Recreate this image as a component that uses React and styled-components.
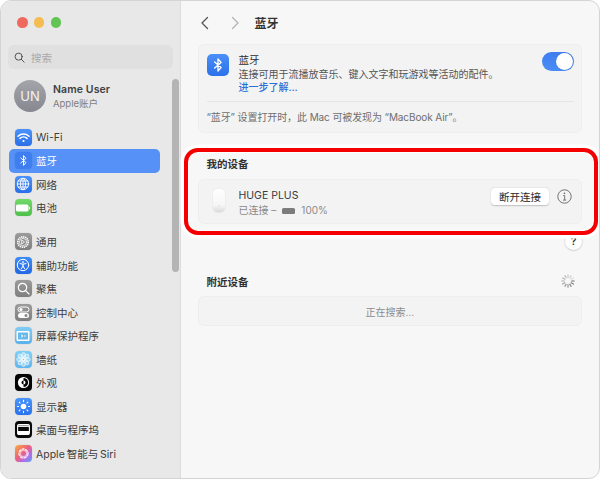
import React from "react";
import styled, { createGlobalStyle } from "styled-components";

const Global = createGlobalStyle`
  html, body { margin: 0; padding: 0; background: #fff; }
  * { box-sizing: border-box; }
  body { font-family: "Inter", "Noto Sans CJK SC", sans-serif; -webkit-font-smoothing: antialiased; }
`;

const Frame = styled.div`
  position: relative;
  width: 600px;
  height: 479px;
  display: flex;
  overflow: hidden;
  border-radius: 11px;
  border: 1px solid #d4d4d4;
  background: #f7f7f7;
`;

const Sidebar = styled.aside`
  position: relative;
  width: 180px;
  flex: none;
  display: flex;
  flex-direction: column;
  background: #e8e8e8;
  border-right: 1px solid #dcdcdc;
`;

const TrafficBar = styled.div`
  height: 43px;
  flex: none;
  display: flex;
  align-items: center;
  gap: 6.3px;
  padding: 0 0 0 16px;
`;

const Light = styled.span`
  width: 10.5px;
  height: 10.5px;
  border-radius: 50%;
  background: ${(p) => p.$c};
`;

const Search = styled.div`
  height: 24px;
  margin: 1px 7px 0 7px;
  border-radius: 6px;
  background: #e0e0e0;
  display: flex;
  align-items: center;
  gap: 6px;
  padding-left: 6px;
  font-size: 10.5px;
  color: #a9a9a9;
`;

const Account = styled.div`
  height: 32px;
  margin: 11px 0 0 13px;
  display: flex;
  align-items: center;
  gap: 7px;
`;

const Avatar = styled.div`
  width: 32px;
  height: 32px;
  border-radius: 50%;
  background: linear-gradient(#a4a5ab, #87888f);
  color: #f3f3f3;
  font-size: 13px;
  display: flex;
  align-items: center;
  justify-content: center;
`;

const AccountText = styled.div`
  display: flex;
  flex-direction: column;
  gap: 2px;
`;

const AccountName = styled.div`
  font-size: 10.5px;
  line-height: 13px;
  font-weight: 600;
  letter-spacing: 0.1px;
  color: #404040;
`;

const AccountSub = styled.div`
  font-size: 9.5px;
  line-height: 11px;
  color: #7d7d7d;
`;

const NavGroup = styled.nav`
  display: flex;
  flex-direction: column;
  margin-top: ${(p) => p.$top}px;
`;

const NavRow = styled.div`
  height: 23.5px;
  width: 151px;
  margin-left: 8px;
  padding-left: 5.5px;
  display: flex;
  align-items: center;
  gap: 4.5px;
  border-radius: 5px;
  font-size: 10.5px;
  color: ${(p) => (p.$active ? "#fff" : "#3d3d3d")};
  background: ${(p) => (p.$active ? "#5591f6" : "transparent")};
`;

const Tile = styled.span`
  width: 17px;
  height: 17px;
  flex: none;
  border-radius: 4px;
  display: flex;
  align-items: center;
  justify-content: center;
  background: ${(p) => p.$bg};
  box-shadow: 0 0 0 0.5px rgba(0, 0, 0, 0.06);
`;

const Scrollbar = styled.div`
  position: absolute;
  left: 170.5px;
  top: 78px;
  width: 7px;
  height: 193px;
  border-radius: 4px;
  background: #b4b4b4;
`;

const Main = styled.main`
  flex: 1;
  display: flex;
  flex-direction: column;
  padding: 0 17px 0 16.5px;
`;

const Header = styled.header`
  height: 43px;
  flex: none;
  display: flex;
  align-items: center;
  padding-left: 2px;
`;

const NavButton = styled.span`
  width: 30px;
  display: flex;
  align-items: center;
`;

const Title = styled.h1`
  margin: 0 0 0 -5px;
  font-size: 12px;
  font-weight: 600;
  color: #333;
`;

const Card = styled.section`
  border-radius: 6px;
  border: 1px solid #eeeeee;
  background: #f3f3f3;
`;

const BtTop = styled.div`
  height: 57px;
  margin: 0 7px 0 8px;
  display: flex;
  border-bottom: 1px solid #e6e6e6;
  padding-top: 9px;
  gap: 10px;
`;

const BtIcon = styled.span`
  width: 22px;
  height: 22px;
  flex: none;
  border-radius: 5px;
  background: linear-gradient(#4a8ff8, #2c71e9);
  display: flex;
  align-items: center;
  justify-content: center;
`;

const BtText = styled.div`
  flex: 1;
  display: flex;
  flex-direction: column;
  font-size: 10px;
  line-height: 13.5px;
  color: #555;
`;

const RowTitle = styled.div`
  font-size: 10.5px;
  color: #2e2e2e;
`;

const LinkText = styled.a`
  color: #2d6fd6;
  font-weight: 500;
`;

const Toggle = styled.span`
  width: 32px;
  height: 19px;
  margin-top: -2px;
  flex: none;
  border-radius: 10px;
  background: linear-gradient(#3e7df0, #4a8cf6);
  display: flex;
  justify-content: flex-end;
  align-items: center;
  padding-right: 1px;
`;

const Knob = styled.span`
  width: 17px;
  height: 17px;
  border-radius: 50%;
  background: #fff;
  box-shadow: 0 0 1px rgba(0, 0, 0, 0.3);
`;

const Foot = styled.div`
  height: 30px;
  padding: 0 0 1px 8px;
  display: flex;
  align-items: center;
  font-size: 10px;
  letter-spacing: -0.1px;
  color: #6f6f6f;
`;

const SectionHead = styled.div`
  display: flex;
  align-items: center;
  justify-content: space-between;
  height: 14px;
  margin-top: ${(p) => p.$top}px;
  margin-bottom: ${(p) => p.$bottom}px;
  padding: 0 7px 0 9px;
  font-size: 10.5px;
  font-weight: 600;
  color: #303030;
`;

const DeviceCard = styled(Card)`
  height: 45px;
  display: flex;
  align-items: flex-start;
  padding: 0 9px 0 13px;
`;

const MouseSlot = styled.span`
  margin-top: 8px;
  display: flex;
`;

const DeviceText = styled.div`
  margin: 9px 0 0 13px;
  flex: 1;
  display: flex;
  flex-direction: column;
  gap: 2px;
`;

const DeviceName = styled.div`
  font-size: 10.5px;
  line-height: 13px;
  color: #3a3a3a;
`;

const DeviceSub = styled.div`
  display: flex;
  align-items: center;
  gap: 5px;
  font-size: 10px;
  line-height: 13px;
  color: #8a8a8a;
`;

const MiniBattery = styled.span`
  width: 13px;
  height: 6px;
  margin: 0 1px;
  border-radius: 1.5px;
  background: #7c7c7c;
`;

const PillButton = styled.button`
  width: 58px;
  height: 17px;
  margin: 8px 8px 0 0;
  padding: 0;
  border: none;
  border-radius: 4px;
  background: #fff;
  box-shadow: 0 0.5px 1.5px rgba(0, 0, 0, 0.22);
  font: inherit;
  font-size: 10.5px;
  color: #2b2b2b;
`;

const InfoSlot = styled.span`
  margin-top: 9px;
  display: flex;
`;

const HelpRow = styled.div`
  height: 26px;
  display: flex;
  justify-content: flex-end;
  align-items: center;
  margin-top: 4px;
`;

const HelpButton = styled.span`
  width: 17px;
  height: 17px;
  border-radius: 50%;
  background: #fff;
  box-shadow: 0 0.5px 2px rgba(0, 0, 0, 0.25);
  display: flex;
  align-items: center;
  justify-content: center;
  font-size: 10.5px;
  font-weight: 600;
  color: #333;
`;

const SearchCard = styled(Card)`
  height: 30px;
  display: flex;
  align-items: center;
  justify-content: center;
  font-size: 10px;
  color: #8c8c8c;
`;

const Highlight = styled.div`
  position: absolute;
  left: 183px;
  top: 147px;
  width: 414px;
  height: 87px;
  border: 4px solid #f40000;
  border-radius: 14px;
  box-shadow: 0 0 0 3.5px #fff, inset 0 0 0 1px #fff;
  pointer-events: none;
`;

const W = { stroke: "#fff", fill: "none", strokeLinecap: "round" };

const WifiGlyph = () => (
  <svg width="13" height="13" viewBox="0 0 13 13" {...W} strokeWidth="1.5">
    <path d="M1 5.2C4 2.3 9 2.3 12 5.2" />
    <path d="M3 7.4C5 5.6 8 5.6 10 7.4" />
    <circle cx="6.5" cy="10" r="1.1" fill="#fff" stroke="none" />
  </svg>
);

const BtGlyph = ({ size = 13, sw = 1 }) => (
  <svg width={size} height={size} viewBox="0 0 13 13" {...W} strokeWidth={sw} strokeLinejoin="round">
    <path d="M3.8 4 9 8.6 6.5 11.4V1.6L9 4.4 3.8 9" />
  </svg>
);

const GlobeGlyph = () => (
  <svg width="14" height="14" viewBox="0 0 14 14" {...W} strokeWidth="0.9">
    <circle cx="7" cy="7" r="5.7" />
    <ellipse cx="7" cy="7" rx="2.6" ry="5.7" />
    <path d="M7 1.3V12.7M1.3 7H12.7M2.2 4H11.8M2.2 10H11.8" />
  </svg>
);

const BatteryGlyph = () => (
  <svg width="14" height="8" viewBox="0 0 14 8">
    <rect x="0" y="0.5" width="12.5" height="7" rx="1.6" fill="#fff" />
    <rect x="13" y="2.7" width="1" height="2.6" rx="0.5" fill="#fff" />
  </svg>
);

const GearGlyph = () => (
  <svg width="14" height="14" viewBox="0 0 14 14" {...W}>
    <circle cx="7" cy="7" r="5.2" strokeWidth="1.7" strokeDasharray="1.3 0.7" strokeLinecap="butt" />
    <circle cx="7" cy="7" r="3.6" strokeWidth="0.7" />
    <path d="M6 5.2 8.5 7 6 8.8Z" strokeWidth="0.8" />
  </svg>
);

const AccessGlyph = () => (
  <svg width="14" height="14" viewBox="0 0 14 14" {...W} strokeWidth="1">
    <circle cx="7" cy="7" r="5.7" />
    <circle cx="7" cy="4.1" r="0.9" fill="#fff" stroke="none" />
    <path d="M4 5.6 7 6.2 10 5.6M7 6.2V8M7 8 5.4 10.8M7 8 8.6 10.8" />
  </svg>
);

const SearchGlyph = ({ size = 13, color = "#fff", sw = 1.2 }) => (
  <svg width={size} height={size} viewBox="0 0 13 13" fill="none" stroke={color} strokeWidth={sw} strokeLinecap="round">
    <circle cx="5.5" cy="5.5" r="4.2" />
    <path d="M8.6 8.6 12 12" />
  </svg>
);

const ControlGlyph = () => (
  <svg width="13" height="13" viewBox="0 0 13 13">
    <rect x="1" y="1" width="11" height="5" rx="2.5" fill="none" stroke="#fff" strokeWidth="1" />
    <circle cx="4" cy="3.5" r="1.5" fill="#fff" />
    <rect x="1" y="7" width="11" height="5" rx="2.5" fill="#fff" />
    <circle cx="9" cy="9.5" r="1.5" fill="#8a8a8a" />
  </svg>
);

const ScreenGlyph = () => (
  <svg width="14" height="12" viewBox="0 0 14 12">
    <rect x="0.5" y="1" width="13" height="10" rx="1.2" fill="#fff" />
    <rect x="2" y="2.5" width="10" height="7" fill="#69b8ec" />
    <path d="M5 7.4 7 6 5 4.8" fill="none" stroke="#fff" strokeWidth="0.9" />
    <path d="M8 6H9.6" stroke="#fff" strokeWidth="0.9" />
  </svg>
);

const FlowerGlyph = () => (
  <svg width="15" height="15" viewBox="0 0 15 15" fill="rgba(255,255,255,.35)" stroke="#fff" strokeWidth="0.6">
    {[0, 45, 90, 135, 180, 225, 270, 315].map((a) => (
      <ellipse key={a} cx="7.5" cy="3.6" rx="2" ry="3" transform={`rotate(${a} 7.5 7.5)`} />
    ))}
  </svg>
);

const AppearanceGlyph = () => (
  <svg width="13" height="13" viewBox="0 0 13 13">
    <circle cx="6.5" cy="6.5" r="5.6" fill="#fff" />
    <path d="M6.5 1.9A4.6 4.6 0 0 1 6.5 11.1Z" fill="#000" />
    <circle cx="6.5" cy="6.5" r="2" fill="#000" />
    <path d="M6.5 4.5A2 2 0 0 1 6.5 8.5Z" fill="#fff" />
  </svg>
);

const SunGlyph = () => (
  <svg width="15" height="15" viewBox="0 0 15 15" fill="#fff" stroke="#fff" strokeWidth="1.1" strokeLinecap="round">
    <circle cx="7.5" cy="7.5" r="2.8" stroke="none" />
    {[0, 45, 90, 135, 180, 225, 270, 315].map((a) => (
      <path key={a} d="M7.5 1.4V2.6" transform={`rotate(${a} 7.5 7.5)`} />
    ))}
  </svg>
);

const DockGlyph = () => (
  <svg width="13" height="11" viewBox="0 0 13 11">
    <rect x="0.6" y="0.6" width="11.8" height="9.8" rx="1.2" fill="none" stroke="#fff" strokeWidth="1.1" />
    <rect x="1" y="7" width="11" height="3.2" fill="#fff" />
    <rect x="1" y="1.5" width="11" height="1.4" fill="#fff" />
  </svg>
);

const SiriGlyph = () => (
  <svg width="15" height="15" viewBox="0 0 15 15" fill="none" stroke="#fff" strokeWidth="1.1">
    <circle cx="7.5" cy="7.5" r="4.6" strokeDasharray="3.2 0.6" />
    <circle cx="7.5" cy="7.5" r="3.2" strokeWidth="1.4" stroke="rgba(255,255,255,.55)" />
  </svg>
);

const Chevron = ({ d, c }) => (
  <svg width="10" height="14" viewBox="0 0 10 14" fill="none" stroke={c} strokeWidth="1.3" strokeLinecap="round" strokeLinejoin="round">
    <path d={d} />
  </svg>
);

const MouseGlyph = () => (
  <svg width="14" height="25" viewBox="0 0 14 25">
    <defs>
      <linearGradient id="m" x1="0" y1="0" x2="0" y2="1">
        <stop offset="0" stopColor="#ffffff" />
        <stop offset="0.7" stopColor="#f6f6f6" />
        <stop offset="1" stopColor="#d8d8d8" />
      </linearGradient>
    </defs>
    <rect x="0.5" y="0.5" width="13" height="24" rx="5.5" fill="url(#m)" stroke="#e6e6e6" strokeWidth="0.5" />
    <circle cx="7" cy="18" r="0.8" fill="#d8d8d8" />
  </svg>
);

const InfoGlyph = () => (
  <svg width="15" height="15" viewBox="0 0 15 15" fill="none" stroke="#666" strokeWidth="0.9">
    <circle cx="7.5" cy="7.5" r="6.7" />
    <circle cx="7.5" cy="4.4" r="0.8" fill="#666" stroke="none" />
    <path d="M6.2 6.6H7.7V11M6 11.1H9.2" />
  </svg>
);

const Spinner = () => (
  <svg width="14" height="14" viewBox="0 0 14 14" strokeWidth="1.1" strokeLinecap="round">
    {[0, 1, 2, 3, 4, 5, 6, 7, 8, 9, 10, 11].map((i) => (
      <path
        key={i}
        d="M7 0.8V3.4"
        stroke={`rgba(90,90,90,${0.85 - ((i + 9) % 12) * 0.06})`}
        transform={`rotate(${i * 30} 7 7)`}
      />
    ))}
  </svg>
);

const blue = "linear-gradient(#4c92fa, #2a6fe8)";
const grey = "linear-gradient(#9b9b9b, #7f7f7f)";

const groupOne = [
  { label: "Wi-Fi", bg: blue, icon: <WifiGlyph /> },
  { label: "蓝牙", bg: "#3f7eee", icon: <BtGlyph />, active: true },
  { label: "网络", bg: blue, icon: <GlobeGlyph /> },
  { label: "电池", bg: "linear-gradient(#72d96a, #4fbf4b)", icon: <BatteryGlyph /> },
];

const groupTwo = [
  { label: "通用", bg: grey, icon: <GearGlyph /> },
  { label: "辅助功能", bg: "linear-gradient(#3d8bf8, #2268e6)", icon: <AccessGlyph /> },
  { label: "聚焦", bg: grey, icon: <SearchGlyph /> },
  { label: "控制中心", bg: grey, icon: <ControlGlyph /> },
  { label: "屏幕保护程序", bg: "linear-gradient(#80ccf5, #5db1ea)", icon: <ScreenGlyph /> },
  { label: "墙纸", bg: "linear-gradient(#7fd0f6, #5fb5ee)", icon: <FlowerGlyph /> },
  { label: "外观", bg: "#050505", icon: <AppearanceGlyph /> },
  { label: "显示器", bg: "linear-gradient(#4a94fb, #2a72ee)", icon: <SunGlyph /> },
  { label: "桌面与程序坞", bg: "#0a0a0a", icon: <DockGlyph /> },
  {
    label: "Apple\u2009智能与\u2009Siri",
    bg: "linear-gradient(135deg, #f6b03e, #ef5f7a 45%, #b56be8 70%, #4fa6f5)",
    icon: <SiriGlyph />,
  },
];

const Row = ({ item }) => (
  <NavRow $active={item.active}>
    <Tile $bg={item.bg}>{item.icon}</Tile>
    {item.label}
  </NavRow>
);

export default function App() {
  return (
    <>
      <Global />
      <Frame>
        <Sidebar>
          <TrafficBar>
            <Light $c="#ee6a5f" />
            <Light $c="#f5bd4f" />
            <Light $c="#61c454" />
          </TrafficBar>
          <Search>
            <SearchGlyph size={11} color="#3c3c3c" sw={1} />
            搜索
          </Search>
          <Account>
            <Avatar>UN</Avatar>
            <AccountText>
              <AccountName>Name User</AccountName>
              <AccountSub>Apple账户</AccountSub>
            </AccountText>
          </Account>
          <NavGroup $top={13.5}>
            {groupOne.map((item) => (
              <Row key={item.label} item={item} />
            ))}
          </NavGroup>
          <NavGroup $top={10.5}>
            {groupTwo.map((item) => (
              <Row key={item.label} item={item} />
            ))}
          </NavGroup>
          <Scrollbar />
        </Sidebar>
        <Main>
          <Header>
            <NavButton>
              <Chevron d="M7.5 1.5 2 7l5.5 5.5" c="#555" />
            </NavButton>
            <NavButton>
              <Chevron d="M2.5 1.5 8 7l-5.5 5.5" c="#b4b4b4" />
            </NavButton>
            <Title>蓝牙</Title>
          </Header>
          <Card>
            <BtTop>
              <BtIcon>
                <BtGlyph size={16} sw={1.1} />
              </BtIcon>
              <BtText>
                <RowTitle>蓝牙</RowTitle>
                连接可用于流播放音乐、键入文字和玩游戏等活动的配件。
                <LinkText>进一步了解…</LinkText>
              </BtText>
              <Toggle>
                <Knob />
              </Toggle>
            </BtTop>
            <Foot>“蓝牙” 设置打开时，此 Mac 可被发现为 “MacBook Air”。</Foot>
          </Card>
          <SectionHead $top={23} $bottom={9}>我的设备</SectionHead>
          <DeviceCard>
            <MouseSlot>
              <MouseGlyph />
            </MouseSlot>
            <DeviceText>
              <DeviceName>HUGE PLUS</DeviceName>
              <DeviceSub>
                已连接 – <MiniBattery /> 100%
              </DeviceSub>
            </DeviceText>
            <PillButton>断开连接</PillButton>
            <InfoSlot>
              <InfoGlyph />
            </InfoSlot>
          </DeviceCard>
          <HelpRow>
            <HelpButton>?</HelpButton>
          </HelpRow>
          <SectionHead $top={20} $bottom={8}>
            附近设备
            <Spinner />
          </SectionHead>
          <SearchCard>正在搜索…</SearchCard>
        </Main>
        <Highlight />
      </Frame>
    </>
  );
}
